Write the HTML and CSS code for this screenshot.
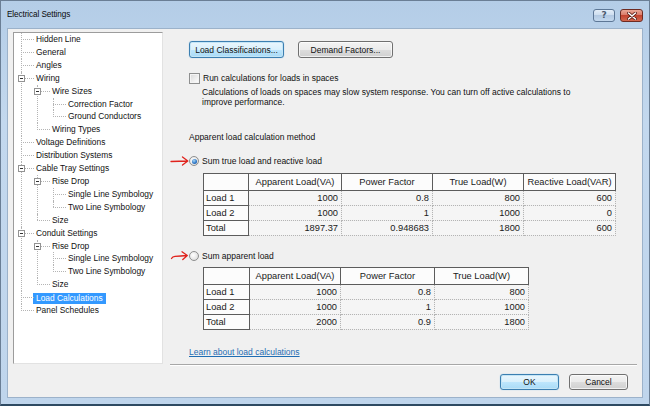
FILE: index.html
```html
<!DOCTYPE html>
<html>
<head>
<meta charset="utf-8">
<link rel="stylesheet" href="styles.css">
</head>
<body>
<div class="window">
  <div class="titlebar">
    <span class="title">Electrical Settings</span>
    <div class="caption-btns">
      <span class="cbtn help">?</span>
      <span class="cbtn close"><svg width="10" height="8" viewBox="0 0 10 8"><path d="M1.5 1 L8.5 7 M8.5 1 L1.5 7" stroke="#5a1c14" stroke-width="3" stroke-linecap="round"/><path d="M1.5 1 L8.5 7 M8.5 1 L1.5 7" stroke="#fff" stroke-width="1.6" stroke-linecap="round"/></svg></span>
    </div>
  </div>
  <div class="client">
    <div class="main">
      <div class="tree-panel">
        <ul class="tree">
          <li><span class="lbl">Hidden Line</span></li>
          <li><span class="lbl">General</span></li>
          <li><span class="lbl">Angles</span></li>
          <li><span class="tog"></span><span class="lbl">Wiring</span>
            <ul>
              <li><span class="tog"></span><span class="lbl">Wire Sizes</span>
                <ul>
                  <li><span class="lbl">Correction Factor</span></li>
                  <li><span class="lbl">Ground Conductors</span></li>
                </ul>
              </li>
              <li><span class="lbl">Wiring Types</span></li>
            </ul>
          </li>
          <li><span class="lbl">Voltage Definitions</span></li>
          <li><span class="lbl">Distribution Systems</span></li>
          <li><span class="tog"></span><span class="lbl">Cable Tray Settings</span>
            <ul>
              <li><span class="tog"></span><span class="lbl">Rise Drop</span>
                <ul>
                  <li><span class="lbl">Single Line Symbology</span></li>
                  <li><span class="lbl">Two Line Symbology</span></li>
                </ul>
              </li>
              <li><span class="lbl">Size</span></li>
            </ul>
          </li>
          <li><span class="tog"></span><span class="lbl">Conduit Settings</span>
            <ul>
              <li><span class="tog"></span><span class="lbl">Rise Drop</span>
                <ul>
                  <li><span class="lbl">Single Line Symbology</span></li>
                  <li><span class="lbl">Two Line Symbology</span></li>
                </ul>
              </li>
              <li><span class="lbl">Size</span></li>
            </ul>
          </li>
          <li class="sel"><span class="lbl">Load Calculations</span></li>
          <li><span class="lbl">Panel Schedules</span></li>
        </ul>
      </div>
      <div class="content">
        <div class="content-body">
          <div class="btn-row">
            <button class="btn focused">Load Classifications...</button>
            <button class="btn">Demand Factors...</button>
          </div>
          <div class="check-row"><span class="checkbox"></span><span>Run calculations for loads in spaces</span></div>
          <p class="desc">Calculations of loads on spaces may slow system response. You can turn off active calculations to<br>improve performance.</p>
          <p class="group-label">Apparent load calculation method</p>
          <div class="radio-row">
            <svg class="arrow" width="19" height="12" viewBox="0 0 19 12"><path d="M1 6.5 Q9 6 17.5 6 M12.5 2 L17.8 6 L12.5 10" fill="none" stroke="#e0221c" stroke-width="1.3" stroke-linecap="round" stroke-linejoin="round"/></svg>
            <span class="radio checked"></span><span>Sum true load and reactive load</span>
          </div>
          <table class="grid g1">
            <colgroup><col class="c45"><col class="c93"><col class="c91"><col class="c91"><col class="c92"></colgroup>
            <tr class="hdr"><th></th><th>Apparent Load(VA)</th><th>Power Factor</th><th>True Load(W)</th><th>Reactive Load(VAR)</th></tr>
            <tr><th class="rh">Load 1</th><td>1000</td><td>0.8</td><td>800</td><td>600</td></tr>
            <tr><th class="rh">Load 2</th><td>1000</td><td>1</td><td>1000</td><td>0</td></tr>
            <tr><th class="rh">Total</th><td>1897.37</td><td>0.948683</td><td>1800</td><td>600</td></tr>
          </table>
          <div class="radio-row second">
            <svg class="arrow" width="19" height="12" viewBox="0 0 19 12"><path d="M1.5 8.5 Q2.5 6.5 5 6.3 Q11 6 17 5.5 M12 1.8 L17.3 5.5 L12.8 9.6" fill="none" stroke="#e0221c" stroke-width="1.3" stroke-linecap="round" stroke-linejoin="round"/></svg>
            <span class="radio"></span><span>Sum apparent load</span>
          </div>
          <table class="grid g2">
            <colgroup><col class="c46"><col class="c91"><col class="c94"><col class="c94"></colgroup>
            <tr class="hdr"><th></th><th>Apparent Load(VA)</th><th>Power Factor</th><th>True Load(W)</th></tr>
            <tr><th class="rh">Load 1</th><td>1000</td><td>0.8</td><td>800</td></tr>
            <tr><th class="rh">Load 2</th><td>1000</td><td>1</td><td>1000</td></tr>
            <tr><th class="rh">Total</th><td>2000</td><td>0.9</td><td>1800</td></tr>
          </table>
          <a class="link" href="#">Learn about load calculations</a>
        </div>
        <div class="separator"></div>
      </div>
    </div>
    <div class="footer">
      <button class="btn focused small">OK</button>
      <button class="btn small">Cancel</button>
    </div>
  </div>
</div>
</body>
</html>
```
FILE: styles.css
```css
html, body {
  margin: 0;
  padding: 0;
  background: #ffffff;
}
body {
  font-family: "Liberation Sans", Arial, sans-serif;
  color: #111;
}
.window {
  width: 650px;
  height: 406px;
  box-sizing: border-box;
  border: 1px solid #6a7e95;
  border-bottom: 2px solid #2e4a62;
  background: linear-gradient(180deg, #b4cde7 0%, #c3d8ee 30%, #bfd5ec 100%);
  display: flex;
  flex-direction: column;
}
.titlebar {
  height: 27px;
  flex: none;
  display: flex;
  align-items: flex-start;
  padding: 0 6px 0 6px;
}
.title {
  font-size: 8.2px;
  line-height: 28px;
  color: #0a0a0a;
  letter-spacing: -0.1px;
}
.caption-btns {
  margin-left: auto;
  margin-top: 8px;
  display: flex;
  gap: 5px;
}
.cbtn {
  width: 22px;
  height: 13px;
  box-sizing: border-box;
  border: 1px solid #5d7796;
  border-radius: 3px;
  display: flex;
  align-items: center;
  justify-content: center;
}
.help {
  background: linear-gradient(180deg, #e3edf8 0%, #cbdcee 50%, #b3c9e2 50%, #c3d8ee 100%);
  color: #4b5b6e;
  font: bold 9px "DejaVu Sans", sans-serif;
  line-height: 11px;
}
.close {
  width: 23px;
  border-color: #6e2b22;
  background: linear-gradient(180deg, #eaa897 0%, #d87563 50%, #c3432f 50%, #d3684f 100%);
}
.client {
  flex: 1;
  margin: 0 6px 6px 6px;
  background: #f0f0f0;
  border: 1px solid #9cb2ca;
  display: flex;
  flex-direction: column;
}
.main {
  display: flex;
  padding: 3px 0 0 5px;
}
.tree-panel {
  width: 150px;
  height: 332px;
  box-sizing: border-box;
  border: 1px solid;
  border-color: #9c9c9c #e2e2e2 #e2e2e2 #9c9c9c;
  background: #ffffff;
  overflow: hidden;
  flex: none;
}
.tree, .tree ul {
  list-style: none;
  margin: 0;
}
.tree {
  padding: 0 0 0 22px;
}
.tree ul {
  padding-left: 16px;
}
.tree li {
  position: relative;
  font-size: 8.4px;
  line-height: 12.9px;
  white-space: nowrap;
  color: #111;
}
.tree li::before {
  content: "";
  position: absolute;
  left: -15px;
  top: 0;
  bottom: 0;
  border-left: 1px dotted #b4b4b4;
}
.tree li:last-child::before {
  bottom: auto;
  height: 6.5px;
}
.tree li::after {
  content: "";
  position: absolute;
  left: -15px;
  top: 6px;
  width: 13px;
  border-top: 1px dotted #b4b4b4;
}
.tog {
  position: absolute;
  left: -18px;
  top: 3px;
  width: 7px;
  height: 7px;
  box-sizing: border-box;
  border: 1px solid #939393;
  background: #fff;
  z-index: 1;
}
.tog::before {
  content: "";
  position: absolute;
  left: 1px;
  top: 2px;
  width: 3px;
  height: 1px;
  background: #333;
}
.sel > .lbl {
  display: inline-block;
  background: #3399ff;
  color: #fff;
  padding: 0 3px;
  margin-left: -3px;
  line-height: 11px;
  vertical-align: -1px;
}
.content {
  flex: 1;
  display: flex;
  flex-direction: column;
  font-size: 8.5px;
}
.content-body {
  flex: 1;
  padding-left: 26px;
}
.btn {
  font-family: "Liberation Sans", Arial, sans-serif;
  font-size: 8.5px;
  color: #111;
  width: 95px;
  height: 17px;
  padding: 0;
  box-sizing: border-box;
  border: 1px solid #707070;
  border-radius: 3px;
  background: linear-gradient(180deg, #f3f3f3 0%, #ebebeb 50%, #dddddd 50%, #d0d0d0 100%);
  box-shadow: inset 0 0 0 1px rgba(255,255,255,0.7);
}
.btn.focused {
  border-color: #3c7fb1;
  background: linear-gradient(180deg, #eaf6fd 0%, #d9f0fc 50%, #bee6fd 50%, #a9dbf6 100%);
  box-shadow: inset 0 0 0 1px #c4e5f6, 0 0 1px #6fb7e5;
}
.btn-row {
  display: flex;
  gap: 14px;
  margin-top: 9px;
}
.check-row {
  display: flex;
  align-items: center;
  gap: 3px;
  margin-top: 15px;
  height: 11px;
  line-height: 11px;
}
.checkbox {
  width: 11px;
  height: 11px;
  box-sizing: border-box;
  border: 1px solid #8e8f8f;
  background: linear-gradient(135deg, #d8d8d8 0%, #f4f4f4 70%, #ffffff 100%);
  box-shadow: inset 0 0 0 1px #f4f4f4;
}
.desc {
  margin: 3px 0 0 13px;
  line-height: 10px;
}
.group-label {
  margin: 25px 0 0 0;
  line-height: 10px;
}
.radio-row {
  display: flex;
  align-items: center;
  height: 12px;
  margin: 13px 0 0 -19px;
}
.radio-row.second {
  margin-top: 14px;
}
.arrow {
  flex: none;
}
.radio {
  width: 10px;
  height: 10px;
  box-sizing: border-box;
  border-radius: 50%;
  border: 1px solid #8e8f8f;
  background: radial-gradient(circle at 40% 40%, #ffffff 0%, #e6e6e6 60%, #cfcfcf 100%);
  margin-right: 3px;
  position: relative;
  flex: none;
}
.radio.checked::after {
  content: "";
  position: absolute;
  left: 1.5px;
  top: 1.5px;
  width: 5px;
  height: 5px;
  border-radius: 50%;
  background: radial-gradient(circle at 40% 35%, #a8d8f8 0%, #2f79c8 55%, #1c4f96 100%);
}
.grid {
  border-collapse: collapse;
  table-layout: fixed;
  margin: 6px 0 0 14px;
  font-size: 9.3px;
  color: #1a1a1a;
}
.g1 { width: 412px; }
.g2 { width: 325px; margin-top: 5px; }
.c45 { width: 45px; }
.c46 { width: 46px; }
.c91 { width: 91px; }
.c92 { width: 92px; }
.c93 { width: 93px; }
.c94 { width: 94px; }
.grid th, .grid td {
  padding: 0;
  line-height: 12px;
  height: 14px;
  overflow: hidden;
  white-space: nowrap;
}
.grid .hdr th {
  height: 16px;
}
.grid th {
  font-weight: normal;
  border: 1px solid #5c5c5c;
  background: #fcfcfc;
  text-align: center;
}
.grid th.rh {
  text-align: left;
  padding-left: 2px;
}
.grid td {
  border: 1px dotted #b4b4b4;
  background: #f5f5f5;
  text-align: right;
  padding-right: 3px;
}
.link {
  display: block;
  width: max-content;
  margin-top: 17px;
  line-height: 10px;
  color: #1f6db3;
  text-decoration: underline;
}
.separator {
  height: 0;
  border-top: 1px solid #a7a7a7;
  border-bottom: 1px solid #ffffff;
  margin: 0 5px -2px 7px;
}
.footer {
  flex: 1;
  display: flex;
  justify-content: flex-end;
  align-items: flex-start;
  gap: 10px;
  padding: 10px 14px 0 0;
}
.btn.small {
  width: 59px;
  height: 16px;
}
```
